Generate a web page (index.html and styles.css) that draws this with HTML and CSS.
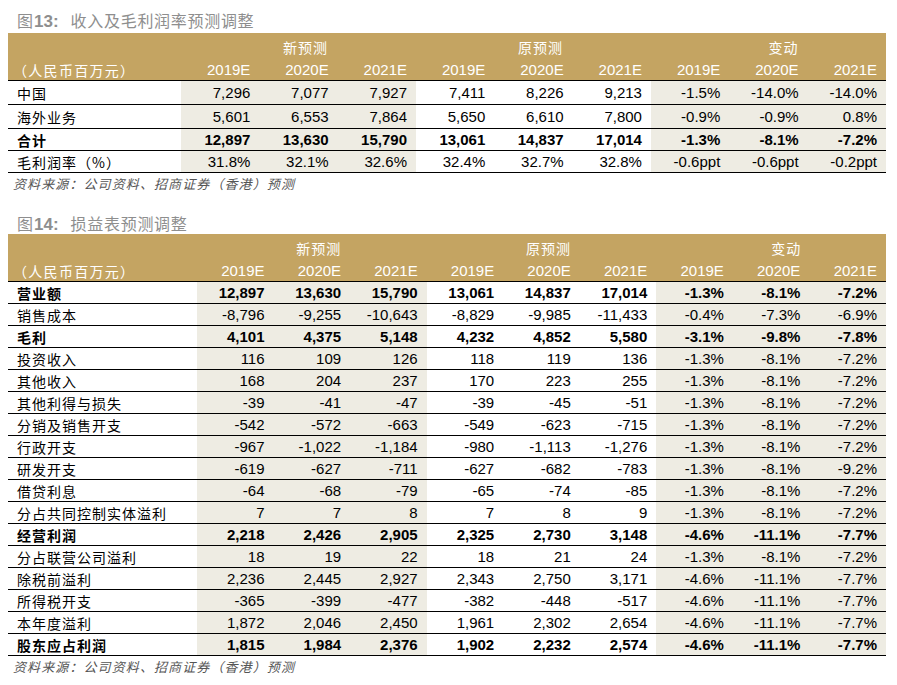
FILE: index.html
```html
<!DOCTYPE html>
<html lang="zh">
<head>
<meta charset="utf-8">
<link rel="stylesheet" href="styles.css">
</head>
<body>
<div class="page">
  <div class="title title-first"><span class="cn">图</span><b class="fig">13:</b><span class="cn tt">收入及毛利润率预测调整</span></div>
  <table class="tbl t1">
    <colgroup><col class="c0"><col span="9"></colgroup>
    <thead>
      <tr class="grp"><th></th><th colspan="3" class="g3">新预测</th><th colspan="3" class="g3">原预测</th><th colspan="3" class="g2">变动</th></tr>
      <tr class="yrs"><th class="unit">（人民币百万元）</th><th>2019E</th><th>2020E</th><th>2021E</th><th>2019E</th><th>2020E</th><th>2021E</th><th>2019E</th><th>2020E</th><th>2021E</th></tr>
    </thead>
    <tbody>
      <tr class="r24"><td class="lbl">中国</td><td class="s">7,296</td><td class="s">7,077</td><td class="s">7,927</td><td>7,411</td><td>8,226</td><td>9,213</td><td class="s">-1.5%</td><td class="s">-14.0%</td><td class="s">-14.0%</td></tr>
      <tr class="r24"><td class="lbl">海外业务</td><td class="s">5,601</td><td class="s">6,553</td><td class="s">7,864</td><td>5,650</td><td>6,610</td><td>7,800</td><td class="s">-0.9%</td><td class="s">-0.9%</td><td class="s">0.8%</td></tr>
      <tr class="b"><td class="lbl">合计</td><td class="s">12,897</td><td class="s">13,630</td><td class="s">15,790</td><td>13,061</td><td>14,837</td><td>17,014</td><td class="s">-1.3%</td><td class="s">-8.1%</td><td class="s">-7.2%</td></tr>
      <tr><td class="lbl">毛利润率（%）</td><td class="s">31.8%</td><td class="s">32.1%</td><td class="s">32.6%</td><td>32.4%</td><td>32.7%</td><td>32.8%</td><td class="s">-0.6ppt</td><td class="s">-0.6ppt</td><td class="s">-0.2ppt</td></tr>
    </tbody>
  </table>
  <div class="src">资料来源：公司资料、招商证券（香港）预测</div>

  <div class="title title-second"><span class="cn">图</span><b class="fig">14:</b><span class="cn tt">损益表预测调整</span></div>
  <table class="tbl t2">
    <colgroup><col class="c0"><col span="9"></colgroup>
    <thead>
      <tr class="grp"><th></th><th colspan="3" class="g3">新预测</th><th colspan="3" class="g3">原预测</th><th colspan="3" class="g2">变动</th></tr>
      <tr class="yrs"><th class="unit">（人民币百万元）</th><th>2019E</th><th>2020E</th><th>2021E</th><th>2019E</th><th>2020E</th><th>2021E</th><th>2019E</th><th>2020E</th><th>2021E</th></tr>
    </thead>
    <tbody>
      <tr class="b"><td class="lbl">营业额</td><td class="s">12,897</td><td class="s">13,630</td><td class="s">15,790</td><td>13,061</td><td>14,837</td><td>17,014</td><td class="s">-1.3%</td><td class="s">-8.1%</td><td class="s">-7.2%</td></tr>
      <tr><td class="lbl">销售成本</td><td class="s">-8,796</td><td class="s">-9,255</td><td class="s">-10,643</td><td>-8,829</td><td>-9,985</td><td>-11,433</td><td class="s">-0.4%</td><td class="s">-7.3%</td><td class="s">-6.9%</td></tr>
      <tr class="b"><td class="lbl">毛利</td><td class="s">4,101</td><td class="s">4,375</td><td class="s">5,148</td><td>4,232</td><td>4,852</td><td>5,580</td><td class="s">-3.1%</td><td class="s">-9.8%</td><td class="s">-7.8%</td></tr>
      <tr><td class="lbl">投资收入</td><td class="s">116</td><td class="s">109</td><td class="s">126</td><td>118</td><td>119</td><td>136</td><td class="s">-1.3%</td><td class="s">-8.1%</td><td class="s">-7.2%</td></tr>
      <tr><td class="lbl">其他收入</td><td class="s">168</td><td class="s">204</td><td class="s">237</td><td>170</td><td>223</td><td>255</td><td class="s">-1.3%</td><td class="s">-8.1%</td><td class="s">-7.2%</td></tr>
      <tr><td class="lbl">其他利得与损失</td><td class="s">-39</td><td class="s">-41</td><td class="s">-47</td><td>-39</td><td>-45</td><td>-51</td><td class="s">-1.3%</td><td class="s">-8.1%</td><td class="s">-7.2%</td></tr>
      <tr><td class="lbl">分销及销售开支</td><td class="s">-542</td><td class="s">-572</td><td class="s">-663</td><td>-549</td><td>-623</td><td>-715</td><td class="s">-1.3%</td><td class="s">-8.1%</td><td class="s">-7.2%</td></tr>
      <tr><td class="lbl">行政开支</td><td class="s">-967</td><td class="s">-1,022</td><td class="s">-1,184</td><td>-980</td><td>-1,113</td><td>-1,276</td><td class="s">-1.3%</td><td class="s">-8.1%</td><td class="s">-7.2%</td></tr>
      <tr><td class="lbl">研发开支</td><td class="s">-619</td><td class="s">-627</td><td class="s">-711</td><td>-627</td><td>-682</td><td>-783</td><td class="s">-1.3%</td><td class="s">-8.1%</td><td class="s">-9.2%</td></tr>
      <tr><td class="lbl">借贷利息</td><td class="s">-64</td><td class="s">-68</td><td class="s">-79</td><td>-65</td><td>-74</td><td>-85</td><td class="s">-1.3%</td><td class="s">-8.1%</td><td class="s">-7.2%</td></tr>
      <tr><td class="lbl">分占共同控制实体溢利</td><td class="s">7</td><td class="s">7</td><td class="s">8</td><td>7</td><td>8</td><td>9</td><td class="s">-1.3%</td><td class="s">-8.1%</td><td class="s">-7.2%</td></tr>
      <tr class="b"><td class="lbl">经营利润</td><td class="s">2,218</td><td class="s">2,426</td><td class="s">2,905</td><td>2,325</td><td>2,730</td><td>3,148</td><td class="s">-4.6%</td><td class="s">-11.1%</td><td class="s">-7.7%</td></tr>
      <tr><td class="lbl">分占联营公司溢利</td><td class="s">18</td><td class="s">19</td><td class="s">22</td><td>18</td><td>21</td><td>24</td><td class="s">-1.3%</td><td class="s">-8.1%</td><td class="s">-7.2%</td></tr>
      <tr><td class="lbl">除税前溢利</td><td class="s">2,236</td><td class="s">2,445</td><td class="s">2,927</td><td>2,343</td><td>2,750</td><td>3,171</td><td class="s">-4.6%</td><td class="s">-11.1%</td><td class="s">-7.7%</td></tr>
      <tr><td class="lbl">所得税开支</td><td class="s">-365</td><td class="s">-399</td><td class="s">-477</td><td>-382</td><td>-448</td><td>-517</td><td class="s">-4.6%</td><td class="s">-11.1%</td><td class="s">-7.7%</td></tr>
      <tr><td class="lbl">本年度溢利</td><td class="s">1,872</td><td class="s">2,046</td><td class="s">2,450</td><td>1,961</td><td>2,302</td><td>2,654</td><td class="s">-4.6%</td><td class="s">-11.1%</td><td class="s">-7.7%</td></tr>
      <tr class="b"><td class="lbl">股东应占利润</td><td class="s">1,815</td><td class="s">1,984</td><td class="s">2,376</td><td>1,902</td><td>2,232</td><td>2,574</td><td class="s">-4.6%</td><td class="s">-11.1%</td><td class="s">-7.7%</td></tr>
    </tbody>
  </table>
  <div class="src">资料来源：公司资料、招商证券（香港）预测</div>
</div>
</body>
</html>
```

FILE: styles.css
```css
html, body {
  margin: 0;
  padding: 0;
  background: #ffffff;
}

.page {
  padding: 0 11px 0 8px;
  font-family: "Liberation Sans", Arial, "Noto Sans CJK SC", sans-serif;
  color: #000;
}

.cn {
  font-family: "Noto Sans CJK SC", sans-serif;
}

.title {
  box-sizing: border-box;
  color: #8e8e8e;
  font-size: 16px;
  line-height: 20px;
  padding-left: 9px;
  white-space: nowrap;
}

.title-first {
  height: 33px;
  padding-top: 10px;
}

.title-second {
  height: 39px;
  padding-top: 18px;
}

.title .fig {
  font-family: "Liberation Sans", Arial, sans-serif;
  font-weight: bold;
  font-size: 17px;
  margin-left: 1px;
}

.title .tt {
  margin-left: 12px;
  letter-spacing: 0.7px;
}

.tbl {
  width: 878px;
  border-collapse: collapse;
  table-layout: fixed;
}

.t1 .c0 { width: 173px; }
.t2 .c0 { width: 189px; }

.tbl thead th {
  background: #c4a462;
  color: #ffffff;
  font-weight: normal;
  padding: 0 9px 0 0;
  text-align: right;
  font-size: 15px;
}

.tbl .grp th {
  height: 24px;
  font-family: "Noto Sans CJK SC", sans-serif;
  font-size: 14px;
  letter-spacing: 1px;
  text-align: center;
  padding: 2px 0 0 14px;
  vertical-align: middle;
}

.tbl .grp th.g2 {
  padding-left: 30px;
}

.tbl .yrs th {
  height: 21px;
  border-bottom: 1px solid #000;
  vertical-align: middle;
}

.tbl .yrs th.unit {
  text-align: left;
  padding-left: 5px;
  font-family: "Noto Sans CJK SC", sans-serif;
  font-size: 14px;
  letter-spacing: 1.3px;
}

.tbl td {
  height: 21px;
  padding: 0 9px 0 0;
  text-align: right;
  font-size: 15px;
  border-bottom: 1px solid #000;
  vertical-align: middle;
  white-space: nowrap;
}

.t1 tr.r24 td {
  height: 23px;
}

.tbl td.s {
  background: #eeece3;
}

.tbl td.lbl {
  text-align: left;
  padding-left: 9px;
  font-family: "Noto Sans CJK SC", sans-serif;
  font-size: 14px;
  letter-spacing: 1px;
}

.tbl tr.b td {
  font-weight: bold;
}

.src {
  font-family: "Noto Sans CJK SC", sans-serif;
  font-style: italic;
  font-size: 13px;
  letter-spacing: 1.1px;
  color: #555;
  line-height: 22px;
  height: 22px;
  padding-left: 5px;
}
```
